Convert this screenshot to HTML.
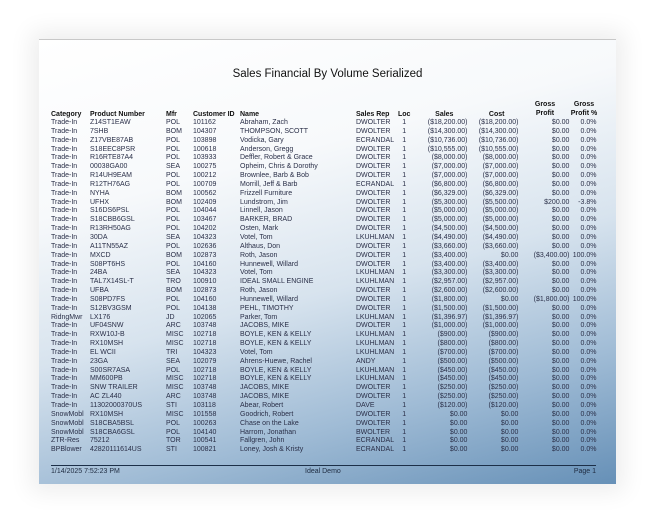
<!DOCTYPE html>
<html><head><meta charset="utf-8"><style>
html,body{margin:0;padding:0;background:#fff;width:655px;height:523px;overflow:hidden;}
.page{position:absolute;left:39px;top:39px;width:577px;height:444px;
background:linear-gradient(165deg,#ffffff 0%,#f7f9fb 30%,#d7e3ee 55%,#9fbbd5 78%,#6690b7 100%);
border-top:1px solid #c8c8c8;box-shadow:0 0 22px 8px rgba(0,0,0,0.07);}
.title{position:absolute;left:0;width:577px;top:28px;text-align:center;font:11.5px "Liberation Sans",sans-serif;color:#111;}
table{position:absolute;left:12px;top:62px;border-collapse:collapse;table-layout:fixed;font:7px "Liberation Sans",sans-serif;color:#2a2f48;}
td{padding:0;height:8.85px;line-height:8.85px;white-space:nowrap;overflow:visible;}
th{padding:0;font-weight:bold;color:#111;text-align:left;vertical-align:bottom;line-height:9px;height:17px;white-space:nowrap;}
.r{text-align:right;}
.c{text-align:center;}
.g{position:absolute;font:bold 7px/9px "Liberation Sans",sans-serif;color:#111;text-align:center;}
.line{position:absolute;left:12px;width:545px;top:425px;border-top:1.5px solid #1c2f48;}
.ft{position:absolute;top:428px;font:7px "Liberation Sans",sans-serif;color:#1e2b40;}
</style></head><body>
<div class="page">
<div class="title">Sales Financial By Volume Serialized</div>
<div class="g" style="left:494px;top:60px;width:24px">Gross<br>Profit</div>
<div class="g" style="left:530px;top:60px;width:30px">Gross<br>Profit %</div>
<table>
<colgroup><col style="width:39px"><col style="width:76px"><col style="width:27px"><col style="width:47px"><col style="width:116px"><col style="width:42px"><col style="width:12px"><col style="width:57px"><col style="width:51px"><col style="width:51px"><col style="width:27px"></colgroup>
<tr><th>Category</th><th>Product Number</th><th>Mfr</th><th>Customer ID</th><th>Name</th><th>Sales Rep</th><th>Loc</th><th class="r" style="padding-right:14px">Sales</th><th class="r" style="padding-right:14px">Cost</th><th></th><th></th></tr>
<tr><td>Trade-In</td><td>Z14ST1EAW</td><td>POL</td><td>101162</td><td>Abraham, Zach</td><td>DWOLTER</td><td class="c">1</td><td class="r">($18,200.00)</td><td class="r">($18,200.00)</td><td class="r">$0.00</td><td class="r">0.0%</td></tr>
<tr><td>Trade-In</td><td>7SHB</td><td>BOM</td><td>104307</td><td>THOMPSON, SCOTT</td><td>DWOLTER</td><td class="c">1</td><td class="r">($14,300.00)</td><td class="r">($14,300.00)</td><td class="r">$0.00</td><td class="r">0.0%</td></tr>
<tr><td>Trade-In</td><td>Z17VBE87AB</td><td>POL</td><td>103898</td><td>Vodicka, Gary</td><td>ECRANDAL</td><td class="c">1</td><td class="r">($10,736.00)</td><td class="r">($10,736.00)</td><td class="r">$0.00</td><td class="r">0.0%</td></tr>
<tr><td>Trade-In</td><td>S18EEC8PSR</td><td>POL</td><td>100618</td><td>Anderson, Gregg</td><td>DWOLTER</td><td class="c">1</td><td class="r">($10,555.00)</td><td class="r">($10,555.00)</td><td class="r">$0.00</td><td class="r">0.0%</td></tr>
<tr><td>Trade-In</td><td>R16RTE87A4</td><td>POL</td><td>103933</td><td>Deffler, Robert &amp; Grace</td><td>DWOLTER</td><td class="c">1</td><td class="r">($8,000.00)</td><td class="r">($8,000.00)</td><td class="r">$0.00</td><td class="r">0.0%</td></tr>
<tr><td>Trade-In</td><td>00038GA00</td><td>SEA</td><td>100275</td><td>Opheim, Chris &amp; Dorothy</td><td>DWOLTER</td><td class="c">1</td><td class="r">($7,000.00)</td><td class="r">($7,000.00)</td><td class="r">$0.00</td><td class="r">0.0%</td></tr>
<tr><td>Trade-In</td><td>R14UH9EAM</td><td>POL</td><td>100212</td><td>Brownlee, Barb &amp; Bob</td><td>DWOLTER</td><td class="c">1</td><td class="r">($7,000.00)</td><td class="r">($7,000.00)</td><td class="r">$0.00</td><td class="r">0.0%</td></tr>
<tr><td>Trade-In</td><td>R12TH76AG</td><td>POL</td><td>100709</td><td>Morrill, Jeff &amp; Barb</td><td>ECRANDAL</td><td class="c">1</td><td class="r">($6,800.00)</td><td class="r">($6,800.00)</td><td class="r">$0.00</td><td class="r">0.0%</td></tr>
<tr><td>Trade-In</td><td>NYHA</td><td>BOM</td><td>100562</td><td>Frizzell Furniture</td><td>DWOLTER</td><td class="c">1</td><td class="r">($6,329.00)</td><td class="r">($6,329.00)</td><td class="r">$0.00</td><td class="r">0.0%</td></tr>
<tr><td>Trade-In</td><td>UFHX</td><td>BOM</td><td>102409</td><td>Lundstrom, Jim</td><td>DWOLTER</td><td class="c">1</td><td class="r">($5,300.00)</td><td class="r">($5,500.00)</td><td class="r">$200.00</td><td class="r">-3.8%</td></tr>
<tr><td>Trade-In</td><td>S16DS6PSL</td><td>POL</td><td>104044</td><td>Linnell, Jason</td><td>DWOLTER</td><td class="c">1</td><td class="r">($5,000.00)</td><td class="r">($5,000.00)</td><td class="r">$0.00</td><td class="r">0.0%</td></tr>
<tr><td>Trade-In</td><td>S18CBB6GSL</td><td>POL</td><td>103467</td><td>BARKER, BRAD</td><td>DWOLTER</td><td class="c">1</td><td class="r">($5,000.00)</td><td class="r">($5,000.00)</td><td class="r">$0.00</td><td class="r">0.0%</td></tr>
<tr><td>Trade-In</td><td>R13RH50AG</td><td>POL</td><td>104202</td><td>Osten, Mark</td><td>DWOLTER</td><td class="c">1</td><td class="r">($4,500.00)</td><td class="r">($4,500.00)</td><td class="r">$0.00</td><td class="r">0.0%</td></tr>
<tr><td>Trade-In</td><td>30DA</td><td>SEA</td><td>104323</td><td>Votel, Tom</td><td>LKUHLMAN</td><td class="c">1</td><td class="r">($4,490.00)</td><td class="r">($4,490.00)</td><td class="r">$0.00</td><td class="r">0.0%</td></tr>
<tr><td>Trade-In</td><td>A11TN55AZ</td><td>POL</td><td>102636</td><td>Althaus, Don</td><td>DWOLTER</td><td class="c">1</td><td class="r">($3,660.00)</td><td class="r">($3,660.00)</td><td class="r">$0.00</td><td class="r">0.0%</td></tr>
<tr><td>Trade-In</td><td>MXCD</td><td>BOM</td><td>102873</td><td>Roth, Jason</td><td>DWOLTER</td><td class="c">1</td><td class="r">($3,400.00)</td><td class="r">$0.00</td><td class="r">($3,400.00)</td><td class="r">100.0%</td></tr>
<tr><td>Trade-In</td><td>S08PT6HS</td><td>POL</td><td>104160</td><td>Hunnewell, Willard</td><td>DWOLTER</td><td class="c">1</td><td class="r">($3,400.00)</td><td class="r">($3,400.00)</td><td class="r">$0.00</td><td class="r">0.0%</td></tr>
<tr><td>Trade-In</td><td>24BA</td><td>SEA</td><td>104323</td><td>Votel, Tom</td><td>LKUHLMAN</td><td class="c">1</td><td class="r">($3,300.00)</td><td class="r">($3,300.00)</td><td class="r">$0.00</td><td class="r">0.0%</td></tr>
<tr><td>Trade-In</td><td>TAL7X14SL-T</td><td>TRO</td><td>100910</td><td>IDEAL SMALL ENGINE</td><td>LKUHLMAN</td><td class="c">1</td><td class="r">($2,957.00)</td><td class="r">($2,957.00)</td><td class="r">$0.00</td><td class="r">0.0%</td></tr>
<tr><td>Trade-In</td><td>UFBA</td><td>BOM</td><td>102873</td><td>Roth, Jason</td><td>DWOLTER</td><td class="c">1</td><td class="r">($2,600.00)</td><td class="r">($2,600.00)</td><td class="r">$0.00</td><td class="r">0.0%</td></tr>
<tr><td>Trade-In</td><td>S08PD7FS</td><td>POL</td><td>104160</td><td>Hunnewell, Willard</td><td>DWOLTER</td><td class="c">1</td><td class="r">($1,800.00)</td><td class="r">$0.00</td><td class="r">($1,800.00)</td><td class="r">100.0%</td></tr>
<tr><td>Trade-In</td><td>S12BV3GSM</td><td>POL</td><td>104138</td><td>PEHL, TIMOTHY</td><td>DWOLTER</td><td class="c">1</td><td class="r">($1,500.00)</td><td class="r">($1,500.00)</td><td class="r">$0.00</td><td class="r">0.0%</td></tr>
<tr><td>RidngMwr</td><td>LX176</td><td>JD</td><td>102065</td><td>Parker, Tom</td><td>LKUHLMAN</td><td class="c">1</td><td class="r">($1,396.97)</td><td class="r">($1,396.97)</td><td class="r">$0.00</td><td class="r">0.0%</td></tr>
<tr><td>Trade-In</td><td>UF04SNW</td><td>ARC</td><td>103748</td><td>JACOBS, MIKE</td><td>DWOLTER</td><td class="c">1</td><td class="r">($1,000.00)</td><td class="r">($1,000.00)</td><td class="r">$0.00</td><td class="r">0.0%</td></tr>
<tr><td>Trade-In</td><td>RXW10J-B</td><td>MISC</td><td>102718</td><td>BOYLE, KEN &amp; KELLY</td><td>LKUHLMAN</td><td class="c">1</td><td class="r">($900.00)</td><td class="r">($900.00)</td><td class="r">$0.00</td><td class="r">0.0%</td></tr>
<tr><td>Trade-In</td><td>RX10MSH</td><td>MISC</td><td>102718</td><td>BOYLE, KEN &amp; KELLY</td><td>LKUHLMAN</td><td class="c">1</td><td class="r">($800.00)</td><td class="r">($800.00)</td><td class="r">$0.00</td><td class="r">0.0%</td></tr>
<tr><td>Trade-In</td><td>EL WCII</td><td>TRI</td><td>104323</td><td>Votel, Tom</td><td>LKUHLMAN</td><td class="c">1</td><td class="r">($700.00)</td><td class="r">($700.00)</td><td class="r">$0.00</td><td class="r">0.0%</td></tr>
<tr><td>Trade-In</td><td>23GA</td><td>SEA</td><td>102079</td><td>Ahrens-Huewe, Rachel</td><td>ANDY</td><td class="c">1</td><td class="r">($500.00)</td><td class="r">($500.00)</td><td class="r">$0.00</td><td class="r">0.0%</td></tr>
<tr><td>Trade-In</td><td>S00SR7ASA</td><td>POL</td><td>102718</td><td>BOYLE, KEN &amp; KELLY</td><td>LKUHLMAN</td><td class="c">1</td><td class="r">($450.00)</td><td class="r">($450.00)</td><td class="r">$0.00</td><td class="r">0.0%</td></tr>
<tr><td>Trade-In</td><td>MM600PB</td><td>MISC</td><td>102718</td><td>BOYLE, KEN &amp; KELLY</td><td>LKUHLMAN</td><td class="c">1</td><td class="r">($450.00)</td><td class="r">($450.00)</td><td class="r">$0.00</td><td class="r">0.0%</td></tr>
<tr><td>Trade-In</td><td>SNW TRAILER</td><td>MISC</td><td>103748</td><td>JACOBS, MIKE</td><td>DWOLTER</td><td class="c">1</td><td class="r">($250.00)</td><td class="r">($250.00)</td><td class="r">$0.00</td><td class="r">0.0%</td></tr>
<tr><td>Trade-In</td><td>AC ZL440</td><td>ARC</td><td>103748</td><td>JACOBS, MIKE</td><td>DWOLTER</td><td class="c">1</td><td class="r">($250.00)</td><td class="r">($250.00)</td><td class="r">$0.00</td><td class="r">0.0%</td></tr>
<tr><td>Trade-In</td><td>11302000370US</td><td>STI</td><td>103118</td><td>Abear, Robert</td><td>DAVE</td><td class="c">1</td><td class="r">($120.00)</td><td class="r">($120.00)</td><td class="r">$0.00</td><td class="r">0.0%</td></tr>
<tr><td>SnowMobl</td><td>RX10MSH</td><td>MISC</td><td>101558</td><td>Goodrich, Robert</td><td>DWOLTER</td><td class="c">1</td><td class="r">$0.00</td><td class="r">$0.00</td><td class="r">$0.00</td><td class="r">0.0%</td></tr>
<tr><td>SnowMobl</td><td>S18CBA5BSL</td><td>POL</td><td>100263</td><td>Chase on the Lake</td><td>DWOLTER</td><td class="c">1</td><td class="r">$0.00</td><td class="r">$0.00</td><td class="r">$0.00</td><td class="r">0.0%</td></tr>
<tr><td>SnowMobl</td><td>S18CBA6GSL</td><td>POL</td><td>104140</td><td>Harrom, Jonathan</td><td>BWOLTER</td><td class="c">1</td><td class="r">$0.00</td><td class="r">$0.00</td><td class="r">$0.00</td><td class="r">0.0%</td></tr>
<tr><td>ZTR-Res</td><td>75212</td><td>TOR</td><td>100541</td><td>Fallgren, John</td><td>ECRANDAL</td><td class="c">1</td><td class="r">$0.00</td><td class="r">$0.00</td><td class="r">$0.00</td><td class="r">0.0%</td></tr>
<tr><td>BPBlower</td><td>42820111614US</td><td>STI</td><td>100821</td><td>Loney, Josh &amp; Kristy</td><td>ECRANDAL</td><td class="c">1</td><td class="r">$0.00</td><td class="r">$0.00</td><td class="r">$0.00</td><td class="r">0.0%</td></tr>
</table>
<div class="line"></div>
<div class="ft" style="left:12px">1/14/2025 7:52:23 PM</div>
<div class="ft" style="left:266px">Ideal Demo</div>
<div class="ft" style="right:20px">Page 1</div>
</div>
</body></html>
